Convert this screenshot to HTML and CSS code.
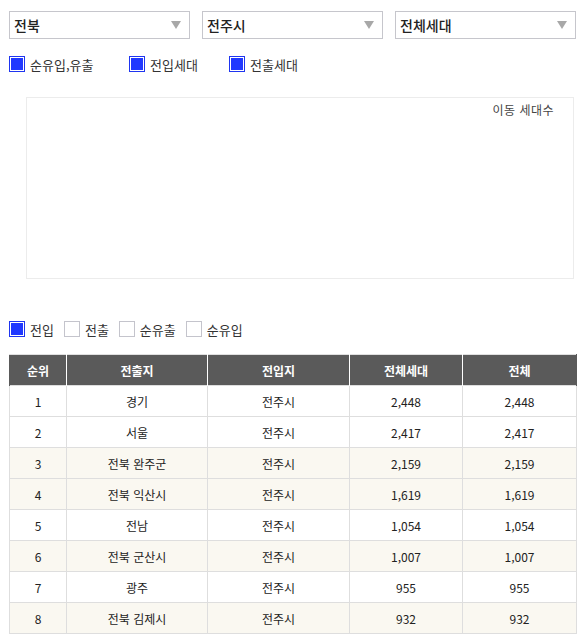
FILE: index.html
```html
<!DOCTYPE html>
<html lang="ko">
<head>
<meta charset="utf-8">
<title>인구이동</title>
<link rel="stylesheet" href="styles.css">
</head>
<body>
<div class="page">
  <div class="selects">
    <div class="select"><span>전북</span><i class="arrow"></i></div>
    <div class="select"><span>전주시</span><i class="arrow"></i></div>
    <div class="select"><span>전체세대</span><i class="arrow"></i></div>
  </div>
  <div class="checks top">
    <label class="chk w120"><span class="box on"></span>순유입,유출</label>
    <label class="chk w100"><span class="box on"></span>전입세대</label>
    <label class="chk"><span class="box on"></span>전출세대</label>
  </div>
  <div class="chart">
    <div class="axis-label">이동 세대수</div>
  </div>
  <div class="checks legend">
    <label class="chk"><span class="box on"></span>전입</label>
    <label class="chk"><span class="box"></span>전출</label>
    <label class="chk"><span class="box"></span>순유출</label>
    <label class="chk"><span class="box"></span>순유입</label>
  </div>
  <table class="grid">
    <colgroup>
      <col class="c1"><col class="c2"><col class="c3"><col class="c4"><col class="c5">
    </colgroup>
    <thead>
      <tr><th>순위</th><th>전출지</th><th>전입지</th><th>전체세대</th><th>전체</th></tr>
    </thead>
    <tbody>
      <tr><td>1</td><td>경기</td><td>전주시</td><td>2,448</td><td>2,448</td></tr>
      <tr><td>2</td><td>서울</td><td>전주시</td><td>2,417</td><td>2,417</td></tr>
      <tr class="alt"><td>3</td><td>전북 완주군</td><td>전주시</td><td>2,159</td><td>2,159</td></tr>
      <tr class="alt"><td>4</td><td>전북 익산시</td><td>전주시</td><td>1,619</td><td>1,619</td></tr>
      <tr><td>5</td><td>전남</td><td>전주시</td><td>1,054</td><td>1,054</td></tr>
      <tr class="alt"><td>6</td><td>전북 군산시</td><td>전주시</td><td>1,007</td><td>1,007</td></tr>
      <tr><td>7</td><td>광주</td><td>전주시</td><td>955</td><td>955</td></tr>
      <tr class="alt"><td>8</td><td>전북 김제시</td><td>전주시</td><td>932</td><td>932</td></tr>
    </tbody>
  </table>
</div>
</body>
</html>
```

FILE: styles.css
```css
html, body {
  margin: 0;
  padding: 0;
  background: #fff;
}
body {
  font-family: "Noto Sans CJK KR", "Noto Sans", sans-serif;
  color: #222;
  overflow: hidden;
}
.page {
  padding: 11px 5px 0 9px;
}
.selects {
  display: flex;
  gap: 12px;
}
.select {
  box-sizing: border-box;
  width: 181px;
  height: 28px;
  border: 1px solid #c6c6cc;
  display: flex;
  align-items: center;
  justify-content: space-between;
  padding: 0 8px 0 4px;
  font-size: 14px;
  font-weight: 500;
  color: #222;
}
.arrow {
  width: 0;
  height: 0;
  border-left: 5px solid transparent;
  border-right: 5px solid transparent;
  border-top: 8px solid #a8a8a8;
}
.checks {
  display: flex;
  align-items: center;
  font-size: 13px;
  color: #333;
}
.checks.top {
  margin-top: 16px;
  height: 18px;
}
.w120 { width: 120px; }
.w100 { width: 100px; }
.chk {
  display: flex;
  align-items: center;
  gap: 5px;
  white-space: nowrap;
  flex-shrink: 0;
}
.box {
  box-sizing: border-box;
  width: 16px;
  height: 16px;
  border: 1px solid #c4c4cc;
  background: #fff;
  display: inline-block;
  flex-shrink: 0;
}
.box.on {
  border-color: #1f35f0;
  background: #2038ff;
  box-shadow: inset 0 0 0 1px #fff;
}
.chart {
  box-sizing: border-box;
  margin: 24px 2px 0 17px;
  height: 182px;
  border: 1px solid #ececec;
  display: flex;
  justify-content: flex-end;
  align-items: flex-start;
  padding: 3px 19px 0 0;
}
.axis-label {
  font-size: 12px;
  color: #444;
  letter-spacing: 0.5px;
}
.checks.legend {
  margin-top: 41px;
  height: 18px;
  gap: 10px;
}
.grid {
  margin-top: 16px;
  width: 567px;
  border-collapse: collapse;
  table-layout: fixed;
  font-size: 12px;
}
.c1 { width: 57px; }
.c2 { width: 141px; }
.c3 { width: 142px; }
.c4 { width: 113px; }
.c5 { width: 114px; }
.grid th {
  background: #5a5a5a;
  color: #fff;
  font-weight: 700;
  height: 30px;
  padding: 0;
  border-left: 1px solid #fff;
  border-right: 1px solid #fff;
  border-top: 1px solid #e0e0e0;
}
.grid th:first-child { border-left: 1px solid #5a5a5a; }
.grid th:last-child { border-right: 1px solid #5a5a5a; }
.grid td {
  height: 30px;
  padding: 0;
  text-align: center;
  border: 1px solid #dedede;
  color: #222;
}
.grid tr.alt td {
  background: #faf8f1;
}
```
